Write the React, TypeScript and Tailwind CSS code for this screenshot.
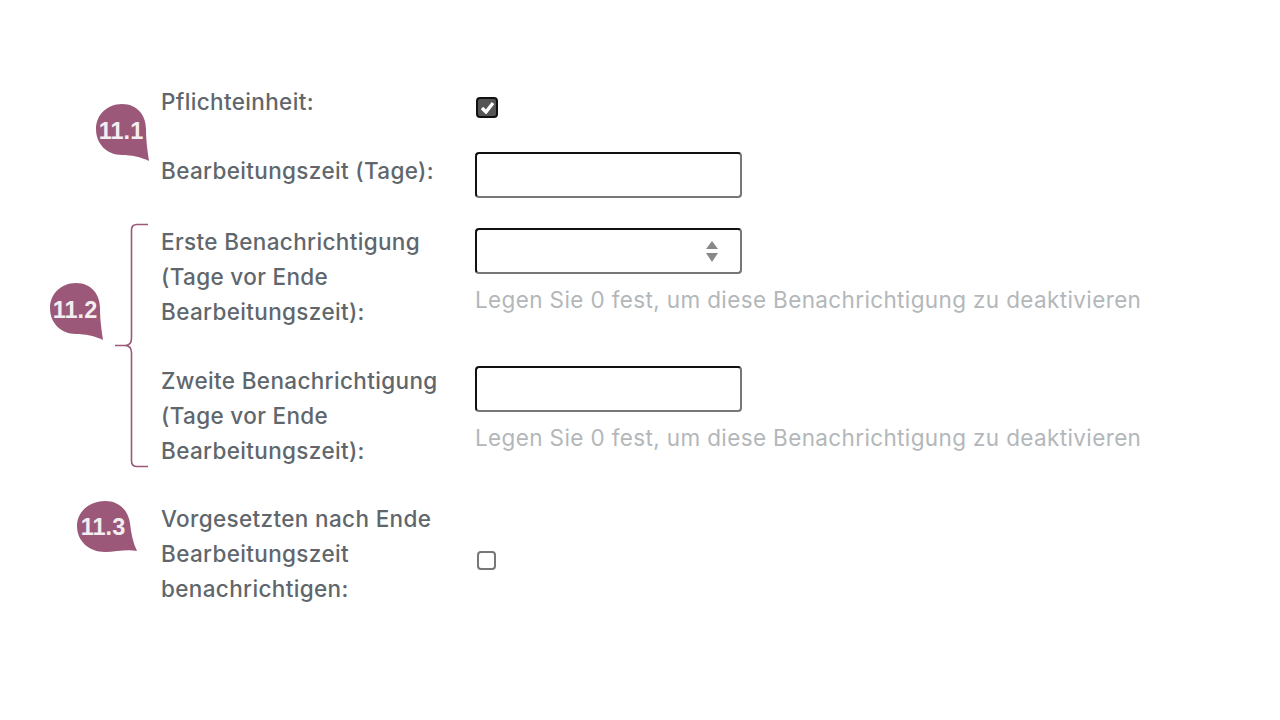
const Bubble = ({ label, className }: { label: string; className: string }) => (
  <div className={`absolute w-[54px] h-[57px] ${className}`}>
    <svg width="54" height="57" viewBox="0 0 54 57" className="absolute left-0 top-0">
      <path d="M26 0 C41 0 50 11 50 25 C50 35 51 44 53 57 C45 53 35 51 26 51 C11 51 0 40 0 25 C0 11 11 0 26 0 Z" fill="#9b5878" />
    </svg>
    <span className="absolute left-0 top-[14px] w-[50px] text-center text-[#f4eef1] text-[23.5px] leading-[26px] font-bold font-['Liberation_Sans',sans-serif]">
      {label}
    </span>
  </div>
);

const BubbleSide = ({ label, className }: { label: string; className: string }) => (
  <div className={`absolute w-[60px] h-[51px] ${className}`}>
    <svg width="60" height="51" viewBox="0 0 60 51" className="absolute left-0 top-0">
      <path d="M28 0 C42 0 51 9 53 22 C54 32 56 42 60 50 C50 48 38 51 28 51 C12 51 0 40 0 25 C0 11 12 0 28 0 Z" fill="#9b5878" />
    </svg>
    <span className="absolute left-0 top-[13px] w-[52px] text-center text-[#f4eef1] text-[23.5px] leading-[26px] font-bold font-['Liberation_Sans',sans-serif]">
      {label}
    </span>
  </div>
);

const Label = ({ children }: { children: React.ReactNode }) => (
  <div className="w-[314px] shrink-0 pt-[1px] text-[22.5px] leading-[35px] tracking-[0.35px] font-medium text-[#5f676d] whitespace-nowrap">{children}</div>
);

const Hint = () => (
  <div className="mt-[8px] text-[22.5px] leading-[35px] tracking-[0.37px] text-[#b3b7ba] whitespace-nowrap">
    Legen Sie 0 fest, um diese Benachrichtigung zu deaktivieren
  </div>
);

const Field = ({ children }: { children?: React.ReactNode }) => (
  <div className="w-[267px] h-[46px] rounded-[4px] border-2 border-[#111111] border-r-[#777777] border-b-[#777777] bg-white flex items-center justify-end pr-[22px]">
    {children}
  </div>
);

export default function App() {
  return (
    <div className="relative w-[1280px] h-[720px] overflow-hidden bg-white pl-[161px] pt-[83px] font-['Inter',sans-serif]">
      <div className="flex h-[69px]">
        <Label>Pflichteinheit:</Label>
        <div className="pt-[14px] pl-[1px]">
          <div className="w-[22px] h-[21px] rounded-[4px] border-2 border-[#111111] bg-[#555555] flex items-center justify-center">
            <svg width="15" height="13" viewBox="0 0 15 13">
              <path d="M2 7 L6 11 L13 2" fill="none" stroke="#ffffff" strokeWidth="3.4" />
            </svg>
          </div>
        </div>
      </div>
      <div className="flex h-[71px]">
        <Label>Bearbeitungszeit (Tage):</Label>
        <Field />
      </div>
      <div className="flex h-[139px]">
        <Label>
          Erste Benachrichtigung
          <br />
          (Tage vor Ende
          <br />
          Bearbeitungszeit):
        </Label>
        <div className="pt-[5px]">
          <Field>
            <svg width="12" height="21" viewBox="0 0 12 21">
              <path d="M6 0 L12 8 L0 8 Z M0 12 L12 12 L6 21 Z" fill="#888888" />
            </svg>
          </Field>
          <Hint />
        </div>
      </div>
      <div className="flex h-[138px]">
        <Label>
          Zweite Benachrichtigung
          <br />
          (Tage vor Ende
          <br />
          Bearbeitungszeit):
        </Label>
        <div className="pt-[4px]">
          <Field />
          <Hint />
        </div>
      </div>
      <div className="flex items-center">
        <Label>
          Vorgesetzten nach Ende
          <br />
          Bearbeitungszeit
          <br />
          benachrichtigen:
        </Label>
        <div className="ml-[2px] mt-[15px] w-[19px] h-[19px] rounded-[4px] border-2 border-[#777777] bg-white" />
      </div>

      <Bubble label="11.1" className="left-[96px] top-[104px]" />
      <Bubble label="11.2" className="left-[50px] top-[283px]" />
      <BubbleSide label="11.3" className="left-[77px] top-[501px]" />

      <svg width="36" height="246" viewBox="0 0 36 246" className="absolute left-[114px] top-[223px]">
        <path
          d="M34 1.5 H23 Q17.5 1.5 17.5 7 V115 Q17.5 122.5 11 122.5 H1 H11 Q17.5 122.5 17.5 130 V238 Q17.5 243.5 23 243.5 H34"
          fill="none"
          stroke="#9b5878"
          strokeWidth="1.6"
        />
      </svg>
    </div>
  );
}
